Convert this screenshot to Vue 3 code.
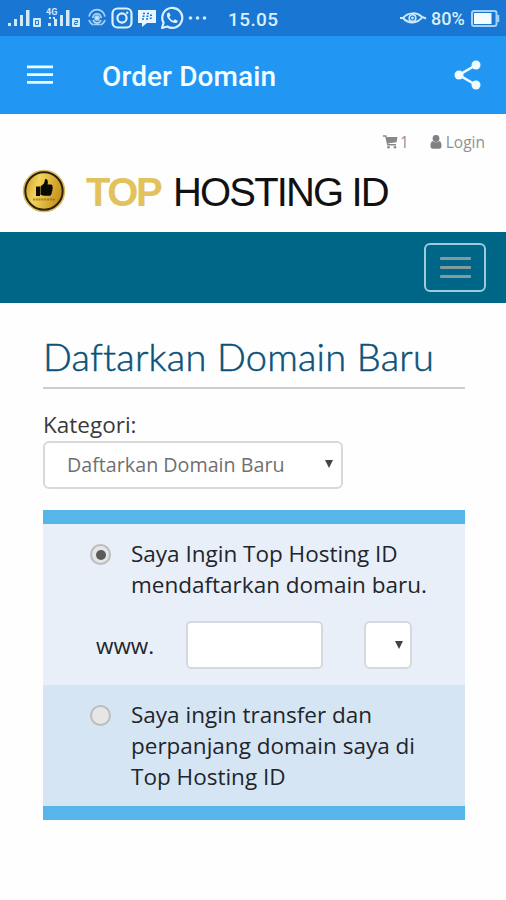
<script setup>
import { ref } from 'vue';

const category = 'Daftarkan Domain Baru';
const selected = ref('register');
const domain = ref('');
</script>

<template>
  <div class="screen">
    <!-- Phone status bar -->
    <div class="status">
      <svg class="signals" width="76" height="24" viewBox="0 0 76 24">
        <g fill="#cfeafa">
          <rect x="1" y="17" width="3" height="3" />
          <rect x="7" y="13" width="3" height="7" />
          <rect x="13" y="9" width="3" height="11" />
          <rect x="19" y="4" width="3.500" height="16" />
          <rect x="26" y="12" width="8" height="9" rx="1" />
          <rect x="41" y="17" width="3" height="3" />
          <rect x="47" y="13" width="3" height="7" />
          <rect x="53" y="9" width="3" height="11" />
          <rect x="59" y="4" width="3.500" height="16" />
          <rect x="65" y="12" width="8" height="9" rx="1" />
          <rect x="42" y="11" width="2" height="2" />
          <rect x="46" y="11" width="2" height="2" />
          <text x="39" y="8.500" class="net">4G</text>
        </g>
        <path d="M28.500 14.500h3v4h-3zM67.500 14.500h3v2h-3v2h3" fill="none" stroke="#1976d2" stroke-width="1" />
      </svg>
      <svg class="radar" width="18" height="20" viewBox="0 0 18 20" fill="none" stroke="#a9d4f5" stroke-width="1.700">
        <circle cx="9" cy="10" r="2" fill="#cfeafa" />
        <path d="M4.800 10a4.200 4.200 0 0 1 8.400 0M13 12a4.200 4.200 0 0 1-8 0M1 8.500a8.100 8.100 0 0 1 16 0M1 12a8.100 8.100 0 0 0 4 5M17 12a8.100 8.100 0 0 1-4 5M5.500 16.500h7" />
      </svg>
      <svg class="insta" width="22" height="22" viewBox="0 0 22 22" fill="none" stroke="#daf1ff" stroke-width="2.200">
        <rect x="1.500" y="1.500" width="19" height="19" rx="5" />
        <circle cx="11" cy="11" r="4.600" />
        <circle cx="16.200" cy="5.700" r="1.200" fill="#daf1ff" stroke="none" />
      </svg>
      <svg class="bbm" width="20" height="20" viewBox="0 0 20 20">
        <path d="M1 2h18v13H10l-5 4v-4H1z" fill="#e6f6ff" />
        <path d="M6 5.500h2M10 5.500h2M5.500 8.200h2M9.500 8.200h2M13 7.200h2M5 11h2M9 11h2M12.700 10.200h2" stroke="#1976d2" stroke-width="1.500" />
      </svg>
      <svg class="wa" width="24" height="24" viewBox="0 0 24 24">
        <path d="M2 22l1.600-5.200A10 10 0 1 1 7.300 20.500z" fill="none" stroke="#daf1ff" stroke-width="2.200" stroke-linejoin="round" />
        <path d="M8.500 6.500c-.5 0-1.600.8-1.600 2.600 0 3.600 4.400 8 8.300 8 1.500 0 2.600-1 2.600-2.400l-3-1.500-1.400 1.600c-1.600-.5-3.300-2.100-4-3.900l1.200-1.400-1.100-2.800z" fill="#daf1ff" />
      </svg>
      <svg class="more" width="20" height="4" viewBox="0 0 20 4" fill="#cfeafa">
        <circle cx="2.500" cy="2" r="1.800" />
        <circle cx="9.500" cy="2" r="1.800" />
        <circle cx="16.500" cy="2" r="1.800" />
      </svg>
      <span class="time">15.05</span>
      <svg class="eye" width="28" height="14" viewBox="0 0 28 14" fill="none" stroke="#cfeafa">
        <path d="M1 7h3C9 1 18 1 23 6l4 1.500" stroke-width="2" />
        <path d="M4 7c5 6 14 6 19-.5" stroke-width="2" />
        <circle cx="13.500" cy="7" r="3.300" stroke-width="1.600" />
        <circle cx="13.500" cy="7" r="1" fill="#cfeafa" />
      </svg>
      <span class="percent">80%</span>
      <svg class="battery" width="29" height="17" viewBox="0 0 29 17">
        <rect x="1" y="1" width="24.500" height="15" rx="2" fill="none" stroke="#a5d1f4" stroke-width="2" />
        <rect x="3" y="3" width="17.500" height="11" fill="#f2fbff" />
        <path d="M27 5v7" stroke="#a5d1f4" stroke-width="2.500" />
      </svg>
    </div>

    <!-- App bar -->
    <header class="appbar">
      <svg class="burger" width="28" height="20" viewBox="0 0 28 20">
        <path d="M1 1.800h26M1 9.600h26M1 17.400h26" stroke="#e9fbff" stroke-width="2.800" />
      </svg>
      <h1>Order Domain</h1>
      <svg class="share" width="28" height="30" viewBox="0 0 28 30" fill="#eefcff">
        <path d="M22 5L5 15l17 10" fill="none" stroke="#eefcff" stroke-width="2.600" />
        <circle cx="22" cy="5" r="4.500" />
        <circle cx="5" cy="15" r="4.500" />
        <circle cx="22" cy="25" r="4.500" />
      </svg>
    </header>

    <!-- Site header -->
    <section class="brand">
      <div class="links">
        <svg class="cart" width="15" height="14" viewBox="0 0 15 14">
          <path d="M0 1h2.800l2 8.800H13" fill="none" stroke="#888" stroke-width="1.400" />
          <path d="M3.200 2H14.500l-1 5.300-9 1.200z" fill="#888" />
          <circle cx="5.500" cy="12.200" r="1.300" fill="#888" />
          <circle cx="12" cy="12.200" r="1.300" fill="#888" />
        </svg>
        <span class="count">1</span>
        <svg class="user" width="12" height="14" viewBox="0 0 12 14" fill="#808080">
          <circle cx="6" cy="3.500" r="3.400" />
          <path d="M2.700 6C1 6.500.5 8.500.5 11c0 1.800.8 2.700 2.200 2.700h6.600c1.400 0 2.200-.9 2.200-2.700 0-2.500-.5-4.500-2.200-5-1.900 1.800-4.700 1.800-6.600 0z" />
        </svg>
        <span class="login">Login</span>
      </div>
      <div class="logo">
        <svg width="44" height="44" viewBox="0 0 44 44">
          <defs>
            <linearGradient id="gold" x1="0" y1="0" x2="1" y2="0.300">
              <stop offset="0" stop-color="#c99722" />
              <stop offset="0.400" stop-color="#f3d35a" />
              <stop offset="1" stop-color="#c8961f" />
            </linearGradient>
          </defs>
          <circle cx="22" cy="22" r="21.300" fill="#d9bd62" />
          <circle cx="22" cy="22" r="18.700" fill="url(#gold)" stroke="#29200d" stroke-width="2" />
          <path d="M14 17.500h4v9.500h-4zM18.500 17.500l3.500-3 1.200-4.500c2.300-.2 3.200 1.800 2.400 5.500h3.200c1.500 0 2 1 1.500 2.200.6.800.6 1.700 0 2.500.4 1 .2 1.900-.5 2.600.2 1.200-.5 3.400-1.800 3.900h-6l-3.500-1z" fill="#090805" />
          <path d="M11 30.500h22" stroke="#8a6818" stroke-width="2" stroke-dasharray="2 .8" opacity=".75" />
        </svg>
        <span class="top">TOP</span>
        <span class="hosting">HOSTING ID</span>
      </div>
    </section>

    <nav class="navbar">
      <button class="toggle" type="button" aria-label="Menu">
        <i></i><i></i><i></i>
      </button>
    </nav>

    <!-- Order form -->
    <main class="content">
      <h2>{{ category }}</h2>
      <label class="label">Kategori:</label>
      <div class="select">
        <span>{{ category }}</span>
        <i class="caret"></i>
      </div>

      <div class="options">
        <div class="option first">
          <div class="choice" @click="selected = 'register'">
            <i class="radio" :class="{ on: selected === 'register' }"></i>
            <p>Saya Ingin Top Hosting ID<br>mendaftarkan domain baru.</p>
          </div>
          <div class="domain">
            <span class="www">www.</span>
            <input v-model="domain" type="text">
            <div class="tld"><i class="caret"></i></div>
          </div>
        </div>
        <div class="option second">
          <div class="choice" @click="selected = 'transfer'">
            <i class="radio" :class="{ on: selected === 'transfer' }"></i>
            <p>Saya ingin transfer dan<br>perpanjang domain saya di<br>Top Hosting ID</p>
          </div>
        </div>
      </div>
    </main>
  </div>
</template>

<style>
body {
  background: #fff;
}
</style>

<style scoped>
* {
  box-sizing: border-box;
}

.screen {
  width: 506px;
  height: 900px;
  overflow: hidden;
  background: #fefefe;
  font-family: 'Open Sans', 'Noto Sans', sans-serif;
  font-variant-ligatures: none;
}

svg {
  display: block;
  flex: none;
}

.status {
  display: flex;
  align-items: center;
  height: 36px;
  padding-left: 7px;
  background: #1976d2;
  color: #d8effd;
  font-family: Roboto, sans-serif;
  white-space: nowrap;
}

.net {
  font: bold 9px Roboto, sans-serif;
}

.radar { margin-left: 5px; }
.insta { margin-left: 5px; }
.bbm { margin-left: 4px; }
.wa { margin-left: 3px; }
.more { margin-left: 4px; }

.time {
  width: 54px;
  margin-left: 20px;
  padding-top: 2px;
  font-size: 19px;
  font-weight: 500;
  letter-spacing: 0.4px;
}

.eye { margin-left: 117px; }

.percent {
  width: 36px;
  margin-left: 4px;
  font-size: 18px;
  font-weight: 500;
}

.battery { margin-left: 4px; }

.appbar {
  display: flex;
  align-items: center;
  height: 78px;
  padding: 0 24px 0 26px;
  background: #2196f3;
}

.appbar h1 {
  flex: 1;
  margin: 3px 0 0 48px;
  color: #f2feff;
  font: 500 28px/34px Roboto, sans-serif;
  letter-spacing: 0.1px;
}

.brand {
  height: 118px;
  padding: 17px 21px 0 22px;
}

.links {
  display: flex;
  align-items: center;
  justify-content: flex-end;
  height: 22px;
  color: #909090;
  font-size: 15.500px;
}

.count { margin-left: 2px; }
.user { margin-left: 21px; }
.login { margin-left: 4px; }

.logo {
  display: flex;
  align-items: center;
  height: 44px;
  margin-top: 16px;
  font-family: 'Liberation Sans', sans-serif;
  font-size: 40px;
  line-height: 44px;
  white-space: nowrap;
}

.logo span {
  padding-top: 1px;
}

.top {
  width: 87px;
  margin-left: 20px;
  color: #e2c25c;
  font-weight: bold;
  letter-spacing: -2.4px;
}

.hosting {
  color: #111;
  letter-spacing: -1.850px;
}

.navbar {
  display: flex;
  align-items: center;
  justify-content: flex-end;
  height: 71px;
  padding-right: 20px;
  background: #006687;
}

.toggle {
  display: flex;
  flex-direction: column;
  align-items: center;
  justify-content: center;
  gap: 6px;
  width: 62px;
  height: 49px;
  padding: 0;
  border: 2px solid #9ccbdc;
  border-radius: 6px;
  background: none;
}

.toggle i {
  width: 31px;
  height: 3px;
  border-radius: 1px;
  background: #8799a0;
}

.content {
  padding: 31px 41px 0 43px;
}

h2 {
  height: 55px;
  margin: 0;
  border-bottom: 2px solid #ccc;
  color: #0b5279;
  font: 300 38px/45px Lato, sans-serif;
  letter-spacing: 0.2px;
  -webkit-text-stroke: 0.5px #0b5279;
  white-space: nowrap;
}

.label {
  display: block;
  height: 52px;
  padding-top: 20px;
  color: #3a3a3a;
  font-size: 22.500px;
  line-height: 32px;
}

.select {
  display: flex;
  align-items: center;
  justify-content: space-between;
  width: 300px;
  height: 48px;
  padding: 0 8px 2px 22px;
  border: 2px solid #d9d9d9;
  border-radius: 6px;
  background: #fff;
  color: #707070;
  font-size: 19.700px;
}

.caret {
  border: 4.500px solid transparent;
  border-top: 8px solid #444;
  border-bottom: 0;
}

.options {
  height: 310px;
  margin-top: 21px;
  border: solid #56b6ea;
  border-width: 14px 0;
  color: #1f252c;
  font-size: 22.500px;
}

.option {
  padding: 14px 0 0 47px;
}

.first {
  height: 161px;
  background: #e8eff8;
}

.second {
  height: 121px;
  background: #d6e5f3;
}

.choice {
  display: flex;
}

.choice p {
  margin: 0;
  line-height: 31px;
  white-space: nowrap;
}

.radio {
  display: flex;
  align-items: center;
  justify-content: center;
  flex: none;
  width: 21px;
  height: 21px;
  margin: 6px 20px 0 0;
  border: 2px solid #bdbdbd;
  border-radius: 50%;
  background: #e6e6e6;
}

.radio.on::after {
  content: '';
  width: 10px;
  height: 10px;
  border-radius: 50%;
  background: #5b5b5b;
}

.domain {
  display: flex;
  align-items: center;
  height: 48px;
  margin-top: 21px;
}

.www {
  width: 90px;
  margin-left: 6px;
}

.domain input {
  width: 137px;
  height: 48px;
  padding: 0 10px;
  border: 2px solid #d5d8dc;
  border-radius: 5px;
  outline: none;
  background: #fff;
  font: inherit;
}

.tld {
  display: flex;
  align-items: center;
  justify-content: flex-end;
  width: 48px;
  height: 48px;
  margin-left: 41px;
  padding-right: 7px;
  border: 2px solid #d5d8dc;
  border-radius: 6px;
  background: #fff;
}
</style>
